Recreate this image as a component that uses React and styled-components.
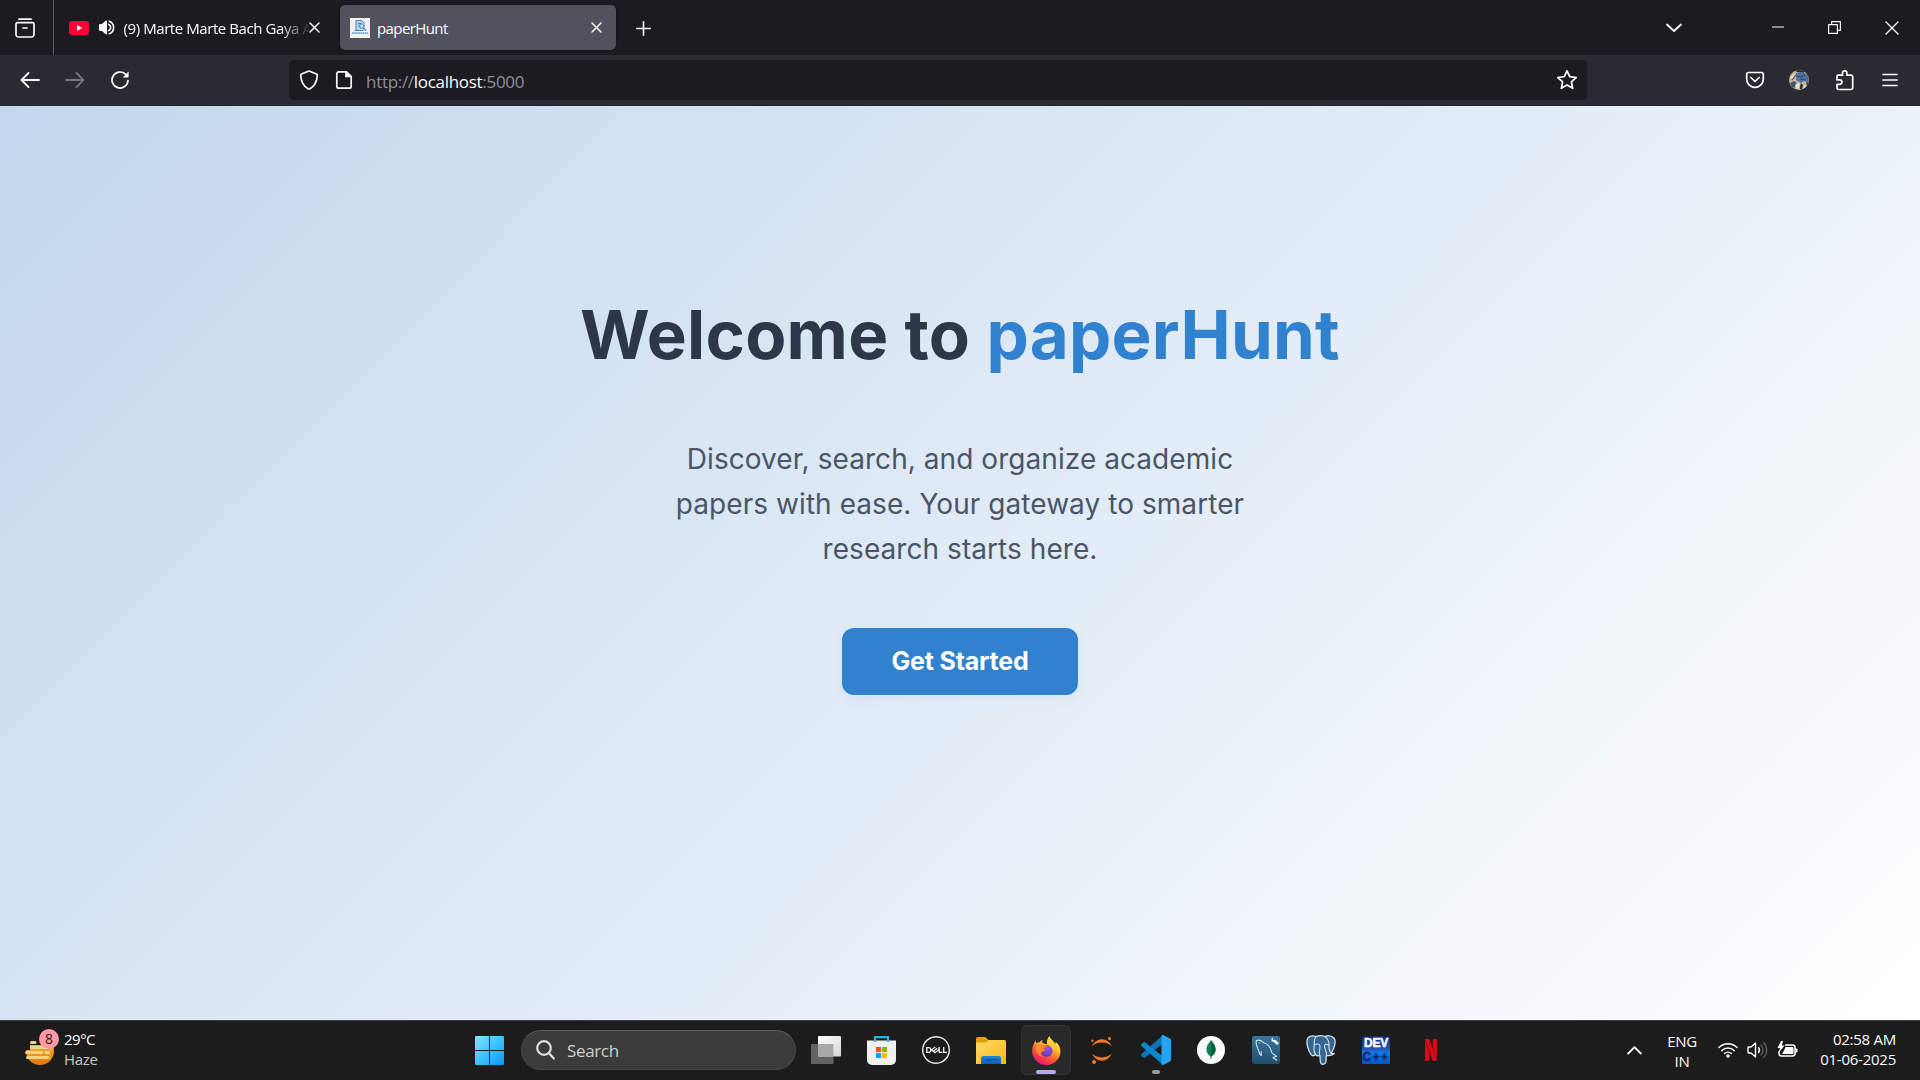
import React from "react";
import styled, { createGlobalStyle } from "styled-components";
import { SiJupyter, SiDell, SiNetflix } from "react-icons/si";

const GlobalStyle = createGlobalStyle`
  * { box-sizing: border-box; }
  html, body { margin: 0; padding: 0; overflow: hidden; background: #1c1b22; }
  button { font: inherit; border: 0; padding: 0; background: none; color: inherit; }
  svg { display: block; flex: none; }
`;

const UI_FONT = `"Open Sans", "Noto Sans", sans-serif`;

const Screen = styled.div`
  width: 1920px;
  height: 1080px;
  display: flex;
  flex-direction: column;
  font-family: ${UI_FONT};
  color: #fbfbfe;
  overflow: hidden;
`;

/* ---------- browser chrome ---------- */

const TabStrip = styled.header`
  height: 55px;
  flex: none;
  display: flex;
  align-items: center;
  background: #1c1b22;
`;

const ViewButton = styled.button`
  && {
    width: 54px;
    height: 55px;
    flex: none;
    padding: 1px 0 0 15px;
    display: flex;
    align-items: center;
    border-right: 1px solid #5b5b66;
  }
`;

const Tab = styled.div`
  width: ${(p) => p.$width}px;
  height: 45px;
  margin-left: ${(p) => p.$gap}px;
  padding: 0 ${(p) => p.$right}px 0 10px;
  display: flex;
  align-items: center;
  border-radius: 5px;
  background: ${(p) => (p.$active ? "#52525e" : "transparent")};
  box-shadow: ${(p) => (p.$active ? "0 0 3px rgba(0,0,0,.6)" : "none")};
`;

const TabTitle = styled.span`
  flex: 1;
  min-width: 0;
  height: 24px;
  line-height: 24px;
  margin-left: ${(p) => p.$gap}px;
  font-size: 15px;
  letter-spacing: ${(p) => p.$spacing}px;
  white-space: nowrap;
  mask-image: ${(p) => (p.$fade ? "linear-gradient(to right, #000 84%, transparent 101%)" : "none")};
`;

const Speaker = styled.span`
  margin-left: 10px;
`;

const NewTab = styled.button`
  && {
    margin-left: 20px;
    padding-top: 2px;
  }
`;

const WindowControls = styled.div`
  margin-left: auto;
  display: flex;
  align-items: center;
  height: 55px;
`;

const ControlSlot = styled.button`
  width: ${(p) => p.$width}px;
  height: 55px;
  display: flex;
  align-items: center;
  justify-content: center;
`;

const NavBar = styled.nav`
  height: 51px;
  flex: none;
  display: flex;
  align-items: center;
  background: #2b2a33;
  border-bottom: 1px solid #25242c;
`;

const NavButtons = styled.div`
  width: 289px;
  padding-left: 20px;
  display: flex;
  gap: 25px;
`;

const AddressBar = styled.div`
  width: 1298px;
  height: 40px;
  padding: 0 9px 0 10px;
  display: flex;
  align-items: center;
  border-radius: 5px;
  background: #1c1b22;
`;

const DocIcon = styled.span`
  margin-left: 16px;
`;

const Url = styled.span`
  flex: 1;
  margin: 4px 0 0 13px;
  font-size: 17px;
  line-height: 24px;
  letter-spacing: -0.3px;
  color: #8f8f97;
`;

const Host = styled.span`
  color: #fbfbfe;
`;

const ToolButtons = styled.div`
  margin-left: auto;
  padding-right: 20px;
  display: flex;
  align-items: center;
  gap: 24.5px;
`;

/* ---------- page ---------- */

const Page = styled.main`
  flex: 1;
  display: flex;
  flex-direction: column;
  align-items: center;
  padding-top: 188px;
  font-family: Inter, sans-serif;
  background: linear-gradient(135deg, #c2d7ed 0%, #ffffff 100%);
`;

const Title = styled.h1`
  margin: 0;
  font-size: 67.2px;
  line-height: 81px;
  font-weight: 700;
  letter-spacing: 0.25px;
  color: #2d3748;
  white-space: nowrap;
`;

const Brand = styled.span`
  color: #3182ce;
`;

const Lead = styled.p`
  width: 600px;
  margin: 62px 0 0;
  font-size: 28px;
  line-height: 45px;
  letter-spacing: 0.06px;
  text-align: center;
  color: #4a5568;
`;

const StartButton = styled.button`
  && {
    width: 236px;
    height: 67px;
    margin-top: 56px;
    padding-bottom: 1px;
    border-radius: 12px;
    background: #3182ce;
    color: #fff;
    font-size: 25px;
    font-weight: 700;
    letter-spacing: -0.2px;
    box-shadow: 0 4px 12px rgba(49, 130, 206, 0.08);
  }
`;

/* ---------- taskbar ---------- */

const Taskbar = styled.footer`
  height: 60px;
  flex: none;
  display: flex;
  align-items: center;
  padding-bottom: 1px;
  background: #1c1c1c;
  border-top: 1px solid #3d4043;
`;

const Weather = styled.div`
  width: 475px;
  padding: 0 0 3px 24px;
  display: flex;
  align-items: center;
`;

const WeatherText = styled.div`
  margin-left: 4px;
  font-size: 15px;
  line-height: 20px;
  letter-spacing: -0.5px;
  color: #fff;
`;

const Muted = styled.div`
  color: #c6c6c6;
  letter-spacing: -0.3px;
`;

const SearchBox = styled.div`
  width: 275px;
  height: 40px;
  margin-left: 17px;
  padding-left: 14px;
  display: flex;
  align-items: center;
  gap: 12px;
  border-radius: 20px;
  border: 1px solid #484848;
  border-top-color: #5c5c5c;
  background: #3b3b3b;
  font-size: 17px;
  letter-spacing: -0.35px;
  color: #cfcfcf;
`;

const Apps = styled.div`
  margin-left: 5px;
  display: flex;
  align-items: center;
  gap: 5px;
`;

const AppTile = styled.button`
  && {
    position: relative;
    width: 50px;
    height: 50px;
    display: flex;
    align-items: center;
    justify-content: center;
    border-radius: 6px;
    color: ${(p) => p.$color || "#fff"};
    background: ${(p) => (p.$open ? "#292929" : "transparent")};
    border: 1px solid ${(p) => (p.$open ? "#333333" : "transparent")};
  }
`;

const Indicator = styled.span`
  position: absolute;
  bottom: 0;
  left: 50%;
  width: ${(p) => (p.$wide ? 20 : 8)}px;
  height: 4px;
  transform: translateX(-50%);
  border-radius: 2px;
  background: ${(p) => (p.$wide ? "#b4aaea" : "#9a9a9a")};
`;

const Disc = styled.span`
  width: 28px;
  height: 28px;
  display: flex;
  align-items: center;
  justify-content: center;
  border-radius: 50%;
  background: #fafafa;
`;

const DevBadge = styled.span`
  width: 28px;
  height: 28px;
  display: flex;
  flex-direction: column;
  align-items: center;
  background: linear-gradient(#16256e, #2a50b4 45%, #0b7cf0 60%, #0a50c8);
  font-family: "Liberation Sans", sans-serif;
  font-size: 12px;
  font-weight: 700;
  line-height: 14px;
  white-space: nowrap;
`;

const DevLine = styled.span`
  letter-spacing: ${(p) => p.$spacing}px;
  color: ${(p) => p.$ink};
  -webkit-text-stroke: 0.5px ${(p) => p.$ink};
`;

const Tray = styled.div`
  margin-left: auto;
  padding-right: 24px;
  display: flex;
  align-items: center;
`;

const Language = styled.div`
  width: 40px;
  margin-left: 20px;
  text-align: center;
  font-size: 15px;
  line-height: 20px;
  letter-spacing: -0.3px;
  padding-top: 1px;
`;

const Status = styled.div`
  margin-left: 16px;
  display: flex;
  align-items: center;
  gap: 9px;
`;

const Clock = styled.div`
  width: 98px;
  padding-bottom: 2px;
  text-align: right;
  font-size: 15px;
  line-height: 20px;
  letter-spacing: -0.25px;
  white-space: nowrap;
`;

/* ---------- drawings ---------- */

const Line = ({ w, h, sw = 1.6, color = "#fbfbfe", children }) => (
  <svg width={w} height={h} viewBox={`0 0 ${w} ${h}`} fill="none" stroke={color} strokeWidth={sw} strokeLinecap="round" strokeLinejoin="round">
    {children}
  </svg>
);

const CloseGlyph = ({ size = 11, sw = 1.5 }) => (
  <Line w={size} h={size} sw={sw}>
    <path d={`M1 1 L${size - 1} ${size - 1} M${size - 1} 1 L1 ${size - 1}`} />
  </Line>
);

const ViewGlyph = () => (
  <Line w={20} h={20} sw={1.7}>
    <path d="M4 1.2h12" />
    <path d="M2.6 4.6h14.8a1.6 1.6 0 0 1 1.6 1.6v10.2a2.6 2.6 0 0 1-2.6 2.6H3.6A2.6 2.6 0 0 1 1 16.4V6.2a1.6 1.6 0 0 1 1.6-1.6z" />
    <path d="M8 10h4" />
  </Line>
);

const YoutubeGlyph = () => (
  <svg width="20" height="14" viewBox="0 0 20 14">
    <rect width="20" height="14" rx="3.4" fill="#ff0033" />
    <path d="M8 4l5.2 3L8 10z" fill="#fff" />
  </svg>
);

const SoundGlyph = () => (
  <svg width="16" height="15" viewBox="0 0 16 15">
    <path d="M0 5.2C0 4.5.5 4 1.2 4H3L6.6.7C7.2.2 8 .6 8 1.3v12.4c0 .7-.8 1.1-1.4.6L3 11H1.200C.5 11 0 10.500 0 9.800z" fill="#fbfbfe" />
    <path d="M9.700 4.400a3.400 3.400 0 0 1 0 6.200M10.200 1.200a6.700 6.700 0 0 1 0 12.600" fill="none" stroke="#fbfbfe" strokeWidth="1.600" strokeLinecap="round" />
  </svg>
);

const PaperFavicon = () => (
  <svg width="20" height="20" viewBox="0 0 20 20">
    <rect width="20" height="20" fill="#f1f1ee" />
    <path d="M6 2.500h6.500l2.500 2.500v7H6z" fill="#b7d3ed" />
    <path d="M6 12V2.500h5.500l3 3" stroke="#3c86cb" fill="none" />
    <path d="M8 5.500h3M8 8h2" stroke="#3c86cb" fill="none" />
    <circle cx="11.800" cy="8" r="2.200" fill="#cfe2f4" stroke="#3c86cb" />
    <path d="M13.500 10l2.500 2.500M4.500 12.500h9" stroke="#3c86cb" strokeWidth="1.200" />
    <path d="M2 15.200h16" stroke="#6ea6da" strokeWidth="1.800" strokeDasharray="1.600 .500" />
  </svg>
);

const ReloadGlyph = () => (
  <svg width="20" height="20" viewBox="0 0 20 20" fill="none" stroke="#fbfbfe" strokeWidth="1.700" strokeLinecap="round">
    <path d="M18 10.500a8 8 0 1 1-2.600-6.400L17 5.500" />
    <path d="M18.600 1.600v5.200a.600.600 0 0 1-.600.600h-5.200z" fill="#fbfbfe" stroke="none" />
  </svg>
);

const AvatarGlyph = () => (
  <svg width="20" height="20" viewBox="0 0 20 20">
    <defs><clipPath id="avatar"><circle cx="10" cy="10" r="10" /></clipPath></defs>
    <g clipPath="url(#avatar)">
      <rect width="20" height="20" fill="#c9b793" />
      <path d="M5 0h10v3L8 2z" fill="#2b2a1e" />
      <path d="M7 3l6-1 7 3v8l-5-2-3 2-5-3z" fill="#4e719f" />
      <path d="M1 13l4-2 3 2-2 2 1 3-4-1z" fill="#3b557c" />
      <path d="M12 13l2 2-1 4h-2l0-3zM17 12l3 1-2 4z" fill="#22395c" />
      <path d="M1 8l5-5-2 6zM8 13l3 1-2 5-3-2zM15 15l2 1-2 3z" fill="#efe0c0" />
      <path d="M8 6l4 1 4-2M11 9l6 1M3 10l4-5" stroke="#2f4a75" strokeWidth="1.100" fill="none" />
    </g>
  </svg>
);

const HazeGlyph = () => (
  <svg width="36" height="40" viewBox="0 0 36 40">
    <defs>
      <linearGradient id="sun" x1="0" y1="0" x2="0" y2="1">
        <stop offset="0" stopColor="#fbc94a" />
        <stop offset="1" stopColor="#e5720f" />
      </linearGradient>
    </defs>
    <circle cx="16" cy="22" r="14" fill="url(#sun)" />
    <path d="M0 0h36v16H0zM0 16h6v5H0z" fill="#1c1c1c" />
    <g stroke="#f4d57c" strokeWidth="3" strokeLinecap="round">
      <path d="M7.500 13.500h3.500M7.500 18.500h18M2.500 23.500h15M22 23.500h2.500M3.500 28.500h20.500" />
    </g>
    <circle cx="25" cy="10" r="10" fill="#ff99a4" />
    <text x="25" y="15.300" textAnchor="middle" fontSize="14" fill="#1c1c1c" fontFamily="Open Sans, sans-serif">8</text>
  </svg>
);

const StartGlyph = () => (
  <svg width="29" height="29" viewBox="0 0 29 29">
    <defs>
      <linearGradient id="win" x1="0" y1="0" x2="1" y2="1">
        <stop offset="0" stopColor="#8ae2ff" />
        <stop offset=".5" stopColor="#3cc4fd" />
        <stop offset="1" stopColor="#0a93fb" />
      </linearGradient>
    </defs>
    <path d="M1 0h13v14H0V1a1 1 0 0 1 1-1zM15 0h13a1 1 0 0 1 1 1v13H15zM0 15h14v14H1a1 1 0 0 1-1-1zM15 15h14v13a1 1 0 0 1-1 1H15z" fill="url(#win)" />
  </svg>
);

const TaskViewGlyph = () => (
  <svg width="30" height="28" viewBox="0 0 30 28">
    <defs>
      <linearGradient id="tv" x1="0" y1="0" x2="1" y2="1"><stop offset="0" stopColor="#fff" /><stop offset="1" stopColor="#d6d6d6" /></linearGradient>
    </defs>
    <rect y="8" width="22.500" height="20" rx="1" fill="#626262" />
    <rect x="7" width="23" height="20.500" rx="1" fill="url(#tv)" />
    <path d="M7 8h15.500v12.500H8a1 1 0 0 1-1-1z" fill="#a8a8a8" />
  </svg>
);

const StoreGlyph = () => (
  <svg width="29" height="29" viewBox="0 0 29 29">
    <path d="M8 6V1.200h13V6" fill="none" stroke="#27b5ea" strokeWidth="2.200" />
    <path d="M0 4.500h29V24a5 5 0 0 1-5 5H5a5 5 0 0 1-5-5z" fill="#f0f0f0" />
    <path d="M8 4v2M21 4v2" stroke="#27b5ea" strokeWidth="2" />
    <path d="M9 11h5v5H9z" fill="#f25022" /><path d="M15 11h5v5h-5z" fill="#7fba00" />
    <path d="M9 17h5v5H9z" fill="#00a4ef" /><path d="M15 17h5v5h-5z" fill="#ffb900" />
  </svg>
);

const FolderGlyph = () => (
  <svg width="30" height="27" viewBox="0 0 30 27">
    <defs>
      <linearGradient id="folder" x1="0" y1="0" x2="1" y2="1"><stop offset="0" stopColor="#ffdc6a" /><stop offset="1" stopColor="#fbb615" /></linearGradient>
      <linearGradient id="pocket" x1="0" y1="0" x2="0" y2="1"><stop offset="0" stopColor="#1787dc" /><stop offset="1" stopColor="#0a61b4" /></linearGradient>
    </defs>
    <path d="M0 1.500A1.500 1.500 0 0 1 1.500 0h8L13 3.500V10H0z" fill="#dfa002" />
    <path d="M0 5.500h10L13 3h15.500A1.500 1.500 0 0 1 30 4.500V27H0z" fill="url(#folder)" />
    <path d="M5 27v-5.500A2.500 2.500 0 0 1 7.500 19h15a2.500 2.500 0 0 1 2.500 2.500V27z" fill="url(#pocket)" />
    <path d="M9 22.700h12" stroke="#0b4f93" strokeWidth="1.200" />
  </svg>
);

const FirefoxGlyph = () => (
  <svg width="29" height="29" viewBox="0 0 29 29">
    <defs>
      <linearGradient id="flame" x1=".8" y1="0" x2=".25" y2="1">
        <stop offset="0" stopColor="#fff44f" />
        <stop offset=".35" stopColor="#ffbd2e" />
        <stop offset=".6" stopColor="#ff6a2c" />
        <stop offset=".85" stopColor="#ff2558" />
        <stop offset="1" stopColor="#e31587" />
      </linearGradient>
      <linearGradient id="tail" x1="0" y1="0" x2="1" y2="1"><stop offset="0" stopColor="#ffa436" /><stop offset="1" stopColor="#ff5a2a" /></linearGradient>
      <radialGradient id="globe" cx=".6" cy=".3" r=".8"><stop offset="0" stopColor="#a04ff0" /><stop offset="1" stopColor="#4b3ba5" /></radialGradient>
    </defs>
    <path d="M17.500 0c.500 2.500 2.800 3.900 4.500 6 .600.800.900 1.600 1.100 2.300.500-.700.600-1.600.500-2.600C26.700 8 28.700 11.500 28.500 15.500 28.200 23 22.200 29 14.500 29S.300 23 .200 15.500C.100 11.500 1.500 8 3.600 4.300c.100 1.200.300 2 .900 2.800C5.300 6.300 6.500 6 7.800 6.200 8.600 4.800 9.600 4.300 10.600 4c-.400 1-.500 2 .100 3 1.300 1 3.300.800 4.300 1.500C14.500 5.500 15 2.500 17.500 0z" fill="url(#flame)" />
    <circle cx="14.500" cy="15" r="6" fill="url(#globe)" />
    <path d="M4.500 10c2-2 4.500-2 6.500-1.500 1.200 1 3.500.700 4.200 1.600-.300 1.500-2.700 1.500-3.200 2.600 0 .900 1 1.300 2 1.400-1 1.500-3 1-4.500 2.400-1 1.500.500 3.500 2.500 4.500-5 0-9-5-7.500-11z" fill="url(#tail)" />
  </svg>
);

const CodeGlyph = () => (
  <svg width="30" height="30" viewBox="0 0 30 30">
    <path d="M22 0v8.500L4.200 22.600a1.500 1.500 0 0 1-1.900 0L.500 21a1.300 1.300 0 0 1 0-1.900z" fill="#0a73b8" />
    <path d="M22 30v-8.500L4.200 7.400a1.500 1.500 0 0 0-1.900 0L.500 9a1.300 1.300 0 0 0 0 1.900z" fill="#0c86cf" />
    <path d="M22 0l7 3.400a1.700 1.700 0 0 1 1 1.600v20a1.700 1.700 0 0 1-1 1.600L22 30c-.800.200-1.500-.300-1.500-1.300V1.300C20.500.300 21.200-.200 22 0z" fill="#26a4f2" />
  </svg>
);

const LeafGlyph = () => (
  <svg width="10" height="20" viewBox="0 0 10 20">
    <path d="M5 0c.600 2 4.600 4.500 4.600 9.400 0 3.600-2.200 5.600-4 7.100L5.300 19h-.600l-.300-2.500C2.600 15 .400 13 .400 9.400.400 4.500 4.400 2 5 0z" fill="#0f8253" />
    <path d="M5 0v16.500C7 15 9.600 13 9.600 9.400 9.600 4.500 5.600 2 5 0z" fill="#056142" />
  </svg>
);

const DolphinGlyph = () => (
  <svg width="28" height="28" viewBox="0 0 28 28">
    <defs><linearGradient id="sql" x1="0" y1="0" x2="0" y2="1"><stop offset="0" stopColor="#38779f" /><stop offset="1" stopColor="#1e4e6c" /></linearGradient></defs>
    <rect width="28" height="28" rx="2" fill="url(#sql)" />
    <path d="M9.500 19.500c-2.500 0-2-4-3.500-6.500C4.800 10.500 3.500 7 4.500 4.500c3-1 5.500.300 7.500 2.500 4 .500 6.500 4.500 8 10 1.300 1.500 3 2 4.500 3.500-1.500.300-2.500.500-3.500 1l4 3M9.500 19.500l-.500-4.500M7 6.500l.600.600" stroke="#cfe0ea" strokeWidth="1.100" fill="none" strokeLinejoin="round" />
    <path d="M22 4.500l4 3.500" stroke="#fff" strokeWidth="2.500" />
    <path d="M20.300 2v2.800h2.800" stroke="#fff" strokeWidth="1.400" fill="none" />
  </svg>
);

const ElephantGlyph = () => (
  <svg width="30" height="30" viewBox="0 0 30 30" strokeLinejoin="round" strokeLinecap="round">
    <path d="M10 1.500C6 0 1.500 1 1 5.500c-.400 4.500 1.500 11 4.500 14.500 1.500 1.500 3 .500 4-.500.800 1 3 1.500 4.500 1 .300 2-.300 6 1 8 1.500 1.300 4 .800 4.700-1 .600-2 .300-4.500.600-7 2 .300 5 .500 8-2-1.500.200-2.500.200-3-.500 3-4.500 5-11.500 3-14.500-2.500-3.500-7-3-9.300-2C16 .500 12.500.500 10 1.500z" fill="#336791" stroke="#d5dfe8" strokeWidth="1.300" />
    <path d="M10 1.500C7.500 4.500 8.500 9 8 13c-.300 2.500.500 5 1.500 6.500M19 1.500c3 2 4.500 6.500 4 9.500-.300 2.500 0 5 2.300 7.500M8.500 10c2-1.500 5-1.500 5.500 1 .300 3-1 4.500-.500 9M22.500 10c-1.500-1.200-4-1-4 1 .200 3 2 5 2 9" fill="none" stroke="#d5dfe8" strokeWidth="1.100" />
  </svg>
);

const WifiGlyph = () => (
  <svg width="20" height="16" viewBox="0 0 20 16" fill="none" stroke="#fff" strokeWidth="1.500" strokeLinecap="round">
    <path d="M1 5.500a12.700 12.700 0 0 1 18 0M3.800 8.600a8.800 8.800 0 0 1 12.400 0M6.600 11.500a4.900 4.900 0 0 1 6.800 0" />
    <circle cx="10" cy="14" r="1.800" fill="#fff" stroke="none" />
  </svg>
);

const VolumeGlyph = () => (
  <svg width="21" height="18" viewBox="0 0 21 18" fill="none" stroke="#fff" strokeWidth="1.400" strokeLinecap="round" strokeLinejoin="round">
    <path d="M1 6.700c0-.400.300-.700.700-.700H4l4.500-4v14L4 12H1.700c-.400 0-.700-.300-.700-.700z" />
    <path d="M11.500 6.500a4 4 0 0 1 0 5" />
    <path d="M14 4a7.500 7.500 0 0 1 0 10M16.700 1.500a11 11 0 0 1 0 15" stroke="#5a5a5a" />
  </svg>
);

const BatteryGlyph = () => (
  <svg width="21" height="18" viewBox="0 0 21 18">
    <path d="M8 4h7.500A2.500 2.500 0 0 1 18 6.500v6a2.500 2.500 0 0 1-2.500 2.500h-11A2.500 2.500 0 0 1 2 12.500V10" fill="none" stroke="#fff" strokeWidth="1.500" />
    <path d="M8.500 6h7c.600 0 1 .400 1 1v5c0 .600-.400 1-1 1H5l2.500-4.500zM18.500 7.500h1a1 1 0 0 1 1 1v2a1 1 0 0 1-1 1h-1z" fill="#fff" />
    <path d="M4 0L.500 7H3l-1.500 5L7.500 4.500H4.800L6 0z" fill="#fff" />
  </svg>
);

export default function App() {
  return (
    <Screen>
      <GlobalStyle />
      <TabStrip>
        <ViewButton><ViewGlyph /></ViewButton>
        <Tab $width={271} $gap={5} $right={10}>
          <YoutubeGlyph />
          <Speaker><SoundGlyph /></Speaker>
          <TabTitle $gap={8.5} $spacing={-0.42} $fade>(9) Marte Marte Bach Gaya A</TabTitle>
          <CloseGlyph />
        </Tab>
        <Tab $active $width={276} $gap={10} $right={14}>
          <PaperFavicon />
          <TabTitle $gap={7} $spacing={-0.6}>paperHunt</TabTitle>
          <CloseGlyph />
        </Tab>
        <NewTab><Line w={15} h={15}><path d="M7.500.800v13.400M.800 7.500h13.400" /></Line></NewTab>
        <WindowControls>
          <ControlSlot $width={150}><Line w={16} h={10} sw={1.8}><path d="M1 1.500l7 6.500 7-6.500" /></Line></ControlSlot>
          <ControlSlot $width={57}><Line w={12} h={3} sw={1.2}><path d="M0 1h12" /></Line></ControlSlot>
          <ControlSlot $width={57}>
            <Line w={13} h={13} sw={1.2}><path d="M.600 3.600h8.800v8.800H.600zM3.600 3.500V.600h8.800v8.800H9.500" /></Line>
          </ControlSlot>
          <ControlSlot $width={57}><CloseGlyph size={14} sw={1.3} /></ControlSlot>
        </WindowControls>
      </TabStrip>

      <NavBar>
        <NavButtons>
          <Line w={20} h={20} sw={1.8}><path d="M19 10H2M8.500 3L1.500 10l7 7" /></Line>
          <Line w={20} h={20} sw={1.8} color="#77767e"><path d="M1 10h17M11.500 3l7 7-7 7" /></Line>
          <ReloadGlyph />
        </NavButtons>
        <AddressBar>
          <Line w={20} h={20} sw={1.7}><path d="M10 1l7.500 3c.500.200.800.600.800 1.200-.300 6-2.800 10.800-7.300 13.500a2 2 0 0 1-2 0C4.500 16 2 11.200 1.700 5.200c0-.600.300-1 .800-1.200z" /></Line>
          <DocIcon>
            <Line w={18} h={20} sw={1.7}>
              <path d="M3.800 1.800h7.700l4.700 4.700v9.700a2 2 0 0 1-2 2H3.800a2 2 0 0 1-2-2V3.800a2 2 0 0 1 2-2z" />
              <path d="M11 1.800v4.700h5z" fill="#fbfbfe" />
            </Line>
          </DocIcon>
          <Url>http://<Host>localhost</Host>:5000</Url>
          <Line w={22} h={22} sw={1.7}><path d="M11 1.800l2.700 5.900 6.500.800-4.800 4.400 1.300 6.400L11 16.100l-5.700 3.200 1.300-6.400L1.800 8.500l6.500-.800z" /></Line>
        </AddressBar>
        <ToolButtons>
          <Line w={20} h={20} sw={1.7}>
            <path d="M3.500 2.500h13a1.800 1.800 0 0 1 1.800 1.800V9a8.300 8.300 0 0 1-16.600 0V4.300a1.800 1.800 0 0 1 1.800-1.800z" /><path d="M5.800 7.500L10 11.500l4.200-4" />
          </Line>
          <AvatarGlyph />
          <Line w={22} h={22} sw={1.7}>
            <path d="M4 6.200h4.500V4a2.200 2.200 0 0 1 4.400 0v2.200H17a1.700 1.700 0 0 1 1.700 1.700v10.900a1.700 1.700 0 0 1-1.700 1.700H4.700A1.700 1.700 0 0 1 3 18.800v-3.500h2.700a2.200 2.200 0 0 0 0-4.400H3V7.200a1 1 0 0 1 1-1z" />
          </Line>
          <Line w={20} h={16} sw={1.7}><path d="M3 2.500h14M3 8h14M3 13.500h14" /></Line>
        </ToolButtons>
      </NavBar>

      <Page>
        <Title>Welcome to <Brand>paperHunt</Brand></Title>
        <Lead>Discover, search, and organize academic papers with ease. Your gateway to smarter research starts here.</Lead>
        <StartButton>Get Started</StartButton>
      </Page>

      <Taskbar>
        <Weather>
          <HazeGlyph />
          <WeatherText>29°C<Muted>Haze</Muted></WeatherText>
        </Weather>
        <StartGlyph />
        <SearchBox>
          <Line w={19} h={20} sw={2.2} color="#dedede"><circle cx="8" cy="8" r="6.800" /><path d="M12.800 13l5 5.500" /></Line>
          Search
        </SearchBox>
        <Apps>
          <AppTile><TaskViewGlyph /></AppTile>
          <AppTile><StoreGlyph /></AppTile>
          <AppTile $color="#ececec"><SiDell size={28} /></AppTile>
          <AppTile><FolderGlyph /></AppTile>
          <AppTile $open><FirefoxGlyph /><Indicator $wide /></AppTile>
          <AppTile $color="#f37726"><SiJupyter size={27} /></AppTile>
          <AppTile><CodeGlyph /><Indicator /></AppTile>
          <AppTile><Disc><LeafGlyph /></Disc></AppTile>
          <AppTile><DolphinGlyph /></AppTile>
          <AppTile><ElephantGlyph /></AppTile>
          <AppTile>
            <DevBadge>
              <DevLine $spacing={-0.2} $ink="#fff">DEV</DevLine>
              <DevLine $spacing={1.5} $ink="#0a2a6c">C++</DevLine>
            </DevBadge>
          </AppTile>
          <AppTile $color="#d80a15"><SiNetflix size={22} /></AppTile>
        </Apps>
        <Tray>
          <Line w={15} h={10} sw={1.9}><path d="M1.200 8.500l6.300-6.300 6.300 6.300" /></Line>
          <Language>ENG<br />IN</Language>
          <Status><WifiGlyph /><VolumeGlyph /><BatteryGlyph /></Status>
          <Clock>02:58 AM<br />01-06-2025</Clock>
        </Tray>
      </Taskbar>
    </Screen>
  );
}
